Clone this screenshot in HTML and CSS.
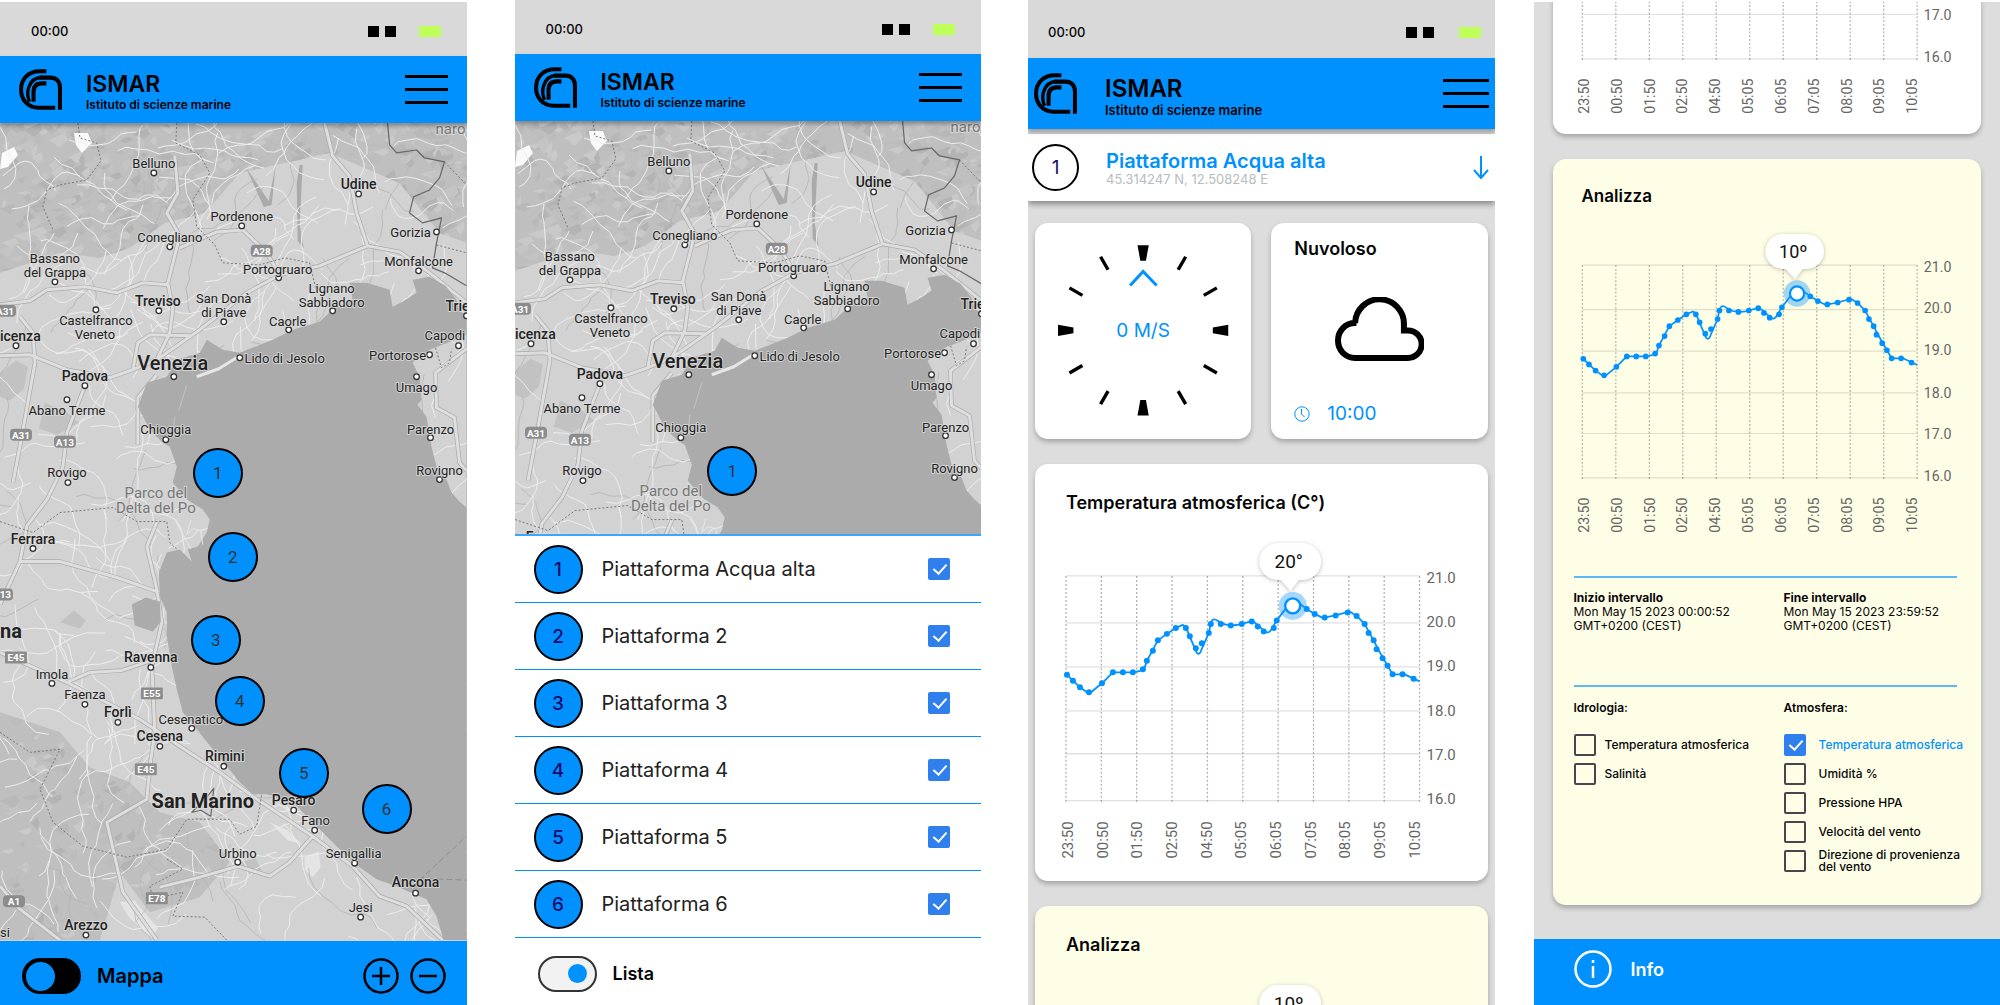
FILE: index.html
```html
<!DOCTYPE html>
<html lang="it">
<head>
<meta charset="utf-8">
<meta name="viewport" content="width=device-width, initial-scale=1">
<title>ISMAR – Istituto di scienze marine</title>
<link rel="stylesheet" href="styles.css">
</head>
<body>
<svg class="defs" aria-hidden="true">
  <symbol id="logo" viewBox="0 0 127 120">
    <g fill="none" stroke="#000">
      <path stroke-width="12" d="M81 6H62C26 6 6 30 6 60s20 54 52 54h49"/>
      <path stroke-width="10" d="M32 96C20 80 22 26 68 24"/>
      <path stroke-width="12" d="M60 25h32c20 0 29 12 29 29v66"/>
      <path stroke-width="12" d="M43 96V68c0-16 8-26 24-26h14"/>
    </g>
  </symbol>
</svg>

<main class="board">

  <section class="phone phone-map">
    <div class="status"><span>00:00</span><i class="sig"></i><i class="sig"></i><i class="bat"></i></div>
    <header class="top">
      <svg class="logo" role="img" aria-label="CNR"><use href="#logo"/></svg>
      <div class="brand"><h1>ISMAR</h1><p>Istituto di scienze marine</p></div>
      <button class="menu" aria-label="Menu"><i></i><i></i><i></i></button>
    </header>
    <div class="map" data-height="818" data-pins="6"></div>
    <footer class="bar bar-map">
      <label class="switch-label"><input class="switch switch-off" type="checkbox" role="switch"><span>Mappa</span></label>
      <button class="round" aria-label="Ingrandisci"><svg viewBox="0 0 36 36"><circle cx="18" cy="18" r="16.5"/><path d="M18 9v18M9 18h18"/></svg></button>
      <button class="round" aria-label="Riduci"><svg viewBox="0 0 36 36"><circle cx="18" cy="18" r="16.5"/><path d="M9 18h18"/></svg></button>
    </footer>
  </section>

  <section class="phone phone-list">
    <div class="status"><span>00:00</span><i class="sig"></i><i class="sig"></i><i class="bat"></i></div>
    <header class="top">
      <svg class="logo" role="img" aria-label="CNR"><use href="#logo"/></svg>
      <div class="brand"><h1>ISMAR</h1><p>Istituto di scienze marine</p></div>
      <button class="menu" aria-label="Menu"><i></i><i></i><i></i></button>
    </header>
    <div class="map" data-height="420" data-pins="1"></div>
    <ul class="platforms">
      <li><label for="p1"><b>1</b><span>Piattaforma Acqua alta</span></label><input class="check" id="p1" type="checkbox" checked></li>
      <li><label for="p2"><b>2</b><span>Piattaforma 2</span></label><input class="check" id="p2" type="checkbox" checked></li>
      <li><label for="p3"><b>3</b><span>Piattaforma 3</span></label><input class="check" id="p3" type="checkbox" checked></li>
      <li><label for="p4"><b>4</b><span>Piattaforma 4</span></label><input class="check" id="p4" type="checkbox" checked></li>
      <li><label for="p5"><b>5</b><span>Piattaforma 5</span></label><input class="check" id="p5" type="checkbox" checked></li>
      <li><label for="p6"><b>6</b><span>Piattaforma 6</span></label><input class="check" id="p6" type="checkbox" checked></li>
    </ul>
    <footer class="bar bar-list">
      <label class="switch-label"><input class="switch switch-on" type="checkbox" role="switch" checked><span>Lista</span></label>
    </footer>
  </section>

  <section class="phone phone-detail">
    <div class="status"><span>00:00</span><i class="sig"></i><i class="sig"></i><i class="bat"></i></div>
    <header class="top">
      <svg class="logo" role="img" aria-label="CNR"><use href="#logo"/></svg>
      <div class="brand"><h1>ISMAR</h1><p>Istituto di scienze marine</p></div>
      <button class="menu" aria-label="Menu"><i></i><i></i><i></i></button>
    </header>
    <div class="place">
      <b>1</b>
      <div class="place-text"><h2>Piattaforma Acqua alta</h2><p>45.314247 N, 12.508248 E</p></div>
      <button class="down" aria-label="Apri"><svg viewBox="0 0 16 24"><path d="M8 0v22M1 14l7 8 7-8"/></svg></button>
    </div>
    <div class="feed">
      <div class="pair">
        <div class="card wind"></div>
        <div class="card weather">
          <h3>Nuvoloso</h3>
          <svg class="cloud" viewBox="0 0 266 192"><path d="M60 182H218A41 41 0 0 0 218 100H206V82A73 73 0 0 0 60 78H64C30 76 9 102 9 130S30 182 60 182Z"/></svg>
          <p class="time"><svg viewBox="0 0 16 16"><circle cx="8" cy="8" r="7.2"/><path d="M7.5 3v5l3 3"/></svg><span>10:00</span></p>
        </div>
      </div>
      <article class="card"><h3>Temperatura atmosferica (C°)</h3><div class="chart" data-tip="20°"></div></article>
      <article class="card yellow"><h3>Analizza</h3><div class="chart" data-tip="10º"></div></article>
    </div>
  </section>

  <section class="phone phone-analysis">
    <div class="feed">
      <article class="card"><h3>Temperatura atmosferica (C°)</h3><div class="chart" data-tip="20°"></div></article>
      <article class="card yellow">
        <h3>Analizza</h3>
        <div class="chart" data-tip="10º"></div>
        <div class="interval">
          <p><strong>Inizio intervallo</strong><br>Mon May 15 2023 00:00:52<br>GMT+0200 (CEST)</p>
          <p><strong>Fine intervallo</strong><br>Mon May 15 2023 23:59:52<br>GMT+0200 (CEST)</p>
        </div>
        <div class="filters">
          <fieldset>
            <legend>Idrologia:</legend>
            <label><input class="check" type="checkbox"><span>Temperatura atmosferica</span></label>
            <label><input class="check" type="checkbox"><span>Salinità</span></label>
          </fieldset>
          <fieldset>
            <legend>Atmosfera:</legend>
            <label class="on"><input class="check" type="checkbox" checked><span>Temperatura atmosferica</span></label>
            <label><input class="check" type="checkbox"><span>Umidità %</span></label>
            <label><input class="check" type="checkbox"><span>Pressione HPA</span></label>
            <label><input class="check" type="checkbox"><span>Velocità del vento</span></label>
            <label><input class="check" type="checkbox"><span>Direzione di provenienza<br>del vento</span></label>
          </fieldset>
        </div>
      </article>
    </div>
    <footer class="bar bar-info">
      <svg viewBox="0 0 38 38"><circle cx="19" cy="19" r="17.5"/><path d="M19 16v12M19 10v3"/></svg>
      <span>Info</span>
    </footer>
  </section>

</main>
<script src="script.js"></script>
</body>
</html>
```

FILE: styles.css
```css
:root {
  --blue: #0091ff;
  --grey: #dddddd;
  --ink: #060606;
}

* { box-sizing: border-box; }

body {
  margin: 0;
  background: #fff;
  color: var(--ink);
  font-family: Inter, "Liberation Sans", sans-serif;
}

h1, h2, h3, p, ul { margin: 0; padding: 0; }
button { border: 0; padding: 0; background: none; color: inherit; font: inherit; cursor: pointer; }
.defs { display: none; }

.board {
  display: flex;
  height: 100vh;
  min-height: 940px;
}

.phone {
  flex: 1 1 0;
  min-width: 0;
  display: flex;
  flex-direction: column;
  overflow: hidden;
}
.phone-map { margin-top: 2px; }
.phone-list { margin-left: 48px; }
.phone-detail { margin-left: 47px; background: var(--grey); }
.phone-analysis { margin: 2px 0 0 39px; background: var(--grey); }

/* status bar */
.status {
  flex: none;
  display: flex;
  align-items: center;
  height: 54px;
  padding: 4px 26px 0 31px;
  background: #d9d9d9;
  font-size: 13px;
  font-weight: 500;
}
.status span { margin-right: auto; }
.sig { width: 11px; height: 11px; margin-left: 6px; background: #000; }
.bat { width: 22px; height: 11px; margin-left: 23px; background: #bfff5a; }
.phone-detail .status { height: 58px; padding: 6px 14px 0 20px; }
.phone-detail .bat { margin-left: 25px; }

/* header */
.top {
  position: relative;
  z-index: 1;
  flex: none;
  display: flex;
  align-items: center;
  height: 67px;
  padding: 0 19px;
  background: var(--blue);
  box-shadow: 0 3px 4px rgba(0, 0, 0, .3);
  color: #000;
}
.logo { width: 43px; height: 41px; }
.brand { margin: 0 auto 0 24px; padding-top: 5px; }
.brand h1 { font-size: 23px; line-height: 26px; font-weight: 600; }
.brand p { font-size: 12px; line-height: 16px; font-weight: 600; }
.menu { display: flex; flex-direction: column; gap: 10px; width: 43px; }
.menu i { height: 3px; background: #000; }
.phone-detail .top { height: 71px; padding: 0 6px; }
.phone-detail .brand { margin-left: 28px; padding-top: 7px; }
.phone-detail .brand h1 { font-size: 24px; }
.phone-detail .brand p { font-size: 13px; }
.phone-detail .menu { width: 46px; }

/* map */
.map { position: relative; flex: 1 1 0; min-height: 0; overflow: hidden; background: #ababab; }
.map svg { display: block; width: 100%; height: auto; font-family: Roboto, sans-serif; }
.pin {
  position: absolute;
  left: var(--x);
  top: var(--y);
  width: 50px;
  height: 50px;
  margin: -25px 0 0 -25px;
  border: 2px solid #000;
  border-radius: 50%;
  background: var(--blue);
  color: #333;
  font: 400 17px Roboto, sans-serif;
}

/* bottom bars */
.bar { flex: none; display: flex; align-items: center; height: 64px; }
.bar-map { padding: 6px 21px 0 22px; gap: 11px; background: var(--blue); color: #000; }
.bar-list { height: 67px; padding: 4px 0 0 23px; }
.bar-info { height: 66px; padding: 0 0 6px 40px; gap: 19px; background: var(--blue); color: #fff; font-size: 18px; font-weight: 600; }
.bar-info svg { width: 38px; height: 38px; fill: none; stroke: #fff; stroke-width: 2.5; }
.switch-label { display: flex; align-items: center; gap: 16px; margin-right: auto; font-size: 20px; font-weight: 600; }
.bar-list .switch-label { font-size: 18px; }
.switch {
  appearance: none;
  display: flex;
  align-items: center;
  width: 59px;
  height: 36px;
  margin: 0;
  padding: 0 4px;
  border-radius: 18px;
  background: #000;
}
.switch::before { content: ""; width: 29px; height: 29px; border-radius: 50%; background: var(--blue); }
.switch-on { justify-content: flex-end; padding: 0 8px; border: 2px solid #333; background: #f2f2f2; }
.switch-on::before { width: 19px; height: 19px; }
.round, .round svg { display: block; width: 36px; height: 36px; }
.round svg { fill: none; stroke: #000; stroke-width: 2.5; }

/* platform list */
.platforms { flex: none; list-style: none; border-top: 2px solid #3aa7f8; }
.platforms li {
  display: flex;
  align-items: center;
  height: 67px;
  padding: 0 31px 0 19px;
  border-bottom: 1px solid var(--blue);
}
.platforms label { flex: 1; display: flex; align-items: center; gap: 19px; font-size: 20px; font-weight: 400; color: #222; }
.platforms b {
  display: grid;
  place-items: center;
  width: 49px;
  height: 49px;
  border: 2px solid #000;
  border-radius: 50%;
  background: var(--blue);
  color: #1d0a6b;
  font-size: 19px;
  font-weight: 500;
}

.check {
  appearance: none;
  flex: none;
  width: 22px;
  height: 22px;
  margin: 0;
  border: 2px solid #49454f;
  border-radius: 2px;
}
.check:checked {
  border: 0;
  background: #2f80ed;
}
.check:checked::before {
  content: "";
  display: block;
  width: 6px;
  height: 11px;
  margin: 3px 0 0 8px;
  border: solid #fff;
  border-width: 0 2px 2px 0;
  transform: rotate(42deg);
}

/* platform detail */
.place {
  flex: none;
  display: flex;
  align-items: center;
  height: 67px;
  margin-top: 5px;
  padding: 0 6px 0 4px;
  background: #fff;
  box-shadow: 0 3px 6px rgba(0, 0, 0, .4);
}
.place b {
  display: grid;
  place-items: center;
  width: 47px;
  height: 47px;
  border: 2px solid #000;
  border-radius: 50%;
  color: #1d0a6b;
  font-size: 19px;
  font-weight: 400;
}
.place-text { margin: 0 auto 0 27px; }
.place-text h2 { color: var(--blue); font-size: 20px; line-height: 22px; font-weight: 600; }
.place-text p { color: #b8bcc0; font-size: 13px; line-height: 14px; }
.down svg { display: block; width: 16px; height: 24px; fill: none; stroke: var(--blue); stroke-width: 2; }

.feed { flex: 1 1 0; min-height: 0; display: flex; flex-direction: column; overflow: hidden; }
.phone-detail .feed { gap: 25px; padding: 22px 7px 0; }
.phone-analysis .feed { justify-content: flex-end; gap: 25px; padding: 0 19px 34px; }

.card {
  flex: none;
  border-radius: 13px;
  background: #fff;
  box-shadow: 0 3px 5px rgba(0, 0, 0, .25);
}
.card h3 { padding: 28px 31px 0; font-size: 18px; line-height: 22px; font-weight: 600; }
.card .chart { padding-top: 9px; }
.yellow { background: #fefee6; }
.phone-analysis .card h3 { padding: 26px 29px 0; font-size: 17px; }
.phone-analysis .card .chart { padding-top: 8px; }
.chart svg { display: block; width: 100%; height: auto; font-family: Roboto, sans-serif; }

.pair { flex: none; display: grid; grid-template-columns: 1fr 1fr; gap: 20px; }
.wind svg { display: block; width: 100%; height: auto; }
.weather { display: flex; flex-direction: column; justify-content: space-between; padding: 15px 23px 14px; }
.card.weather h3 { padding: 0; }
.cloud { width: 89px; margin: 0 auto 6px; fill: none; stroke: #000; stroke-width: 18; }
.time { display: flex; align-items: center; gap: 17px; color: var(--blue); font-size: 19px; line-height: 22px; }
.time svg { width: 16px; height: 16px; fill: none; stroke: var(--blue); }

/* analysis */
.interval, .filters {
  display: grid;
  grid-template-columns: 210px 1fr;
  margin: 0 24px 0 21px;
  border-top: 2px solid #5db8f5;
  font-size: 12px;
}
.interval { height: 109px; margin-top: 22px; padding-top: 13px; line-height: 14px; }
.filters { height: 220px; padding-top: 14px; line-height: 12px; font-weight: 500; }
.filters fieldset { display: flex; flex-direction: column; gap: 7px; min-width: 0; margin: 0; padding: 0; border: 0; }
.filters legend { padding: 0 0 19px; line-height: 14px; font-size: 12px; font-weight: 600; }
.filters label { display: flex; align-items: center; gap: 9px; white-space: nowrap; height: 22px; }
.filters fieldset + fieldset label { gap: 13px; }
.filters .on { color: var(--blue); }
```

FILE: script.js
```js
const INK = '#222', BLUE = '#0091ff';

/* ---------- map ---------- */
const SEA = 'M430 154 446 163 457 177 460 187 467 194V212L456 217 430 227 413 240 420 254 422 277 418 282 427 294 432 324 437 344 447 357 452 370 460 379 467 385V818H444L437 794 427 777 415 772 397 764 377 757 353 740 330 717 310 697 293 680 267 672 253 672 240 660 227 644 213 627 197 607 183 590 177 567 172 544 167 514 167 490 160 474 159 450 167 430 180 427 192 439 188 427 198 424 207 410 210 397 203 387 187 377 173 360 177 344 170 324 163 320 150 307 138 284 147 260 167 254 177 237 200 230 207 217 223 227 240 230 273 217 293 207 320 199 333 187 353 177 350 160 367 160 390 167 393 184 403 179 417 170 413 157Z';

const RELIEF = 'M0 0H467V120L440 110 400 60 330 30 240 50 205 90 165 100 130 125 100 135 60 130 0 150ZM0 590 60 610 90 645 130 660 160 690 200 700 230 740 200 775 150 790 120 750 100 818H0Z';

const MAJOR = [
  'M0 233 30 232 67 247 110 255 133 247 157 237 200 207 247 170 280 152 320 143 368 123 400 129 430 150 467 180',
  'M325 0 333 33 350 53 357 90 368 123',
  'M175 33 178 70 167 90 180 113 168 160 173 187 170 210 157 237',
  'M180 125 217 109 243 107 267 130 280 152',
  'M0 182 30 178 47 167 85 164 117 170 143 160 168 162',
  'M20 194 33 210 35 240 23 307 13 360',
  'M133 247 138 220 150 212 190 213',
  'M85 263 67 310 63 344 47 377 27 403 20 439 0 482',
  'M20 439 60 439 117 455 157 469',
  'M158 397 147 424 157 467 162 500 152 544 155 610 150 644 147 677 107 700 123 770 157 818',
  'M0 530 67 560 140 597 180 624 220 650 253 674 280 692 313 714 353 744 380 774 407 784 443 818',
  'M67 560 90 550 122 548 152 538',
  'M0 764 20 787 60 818',
  'M138 322 138 300 138 275 157 252',
  'M160 765 200 755 238 744 270 754 290 740 313 714',
  'M467 226 436 250 437 285 455 295 460 340 467 348'
];

const DASHED = [
  'M78 0 80 15 97 20 101 38 87 57 60 62 47 67 43 84 53 107',
  'M177 0 176 20 200 32 210 50 193 77 197 104 215 122 223 140 260 142 285 135 310 140 316 165',
  'M0 399 33 410 60 390 113 385 137 399 167 399 170 420 190 439',
  'M0 610 30 630 60 627 40 667 53 700 83 724 127 735 167 727 187 697 230 697 240 712 257 704 262 672',
  'M167 737 183 747 150 764 153 777 183 770 173 794 205 795 227 818',
  'M437 122 467 130M445 39 467 62M436 225 442 245 450 240 452 226'
];

/* x, y of the middle, text, style, anchor */
const LABELS = [
  [451, 6, 'naro', 'park'], [154, 40, 'Belluno'], [359, 61, 'Udine', 'city'], [242, 93, 'Pordenone'],
  [411, 109, 'Gorizia'], [170, 114, 'Conegliano'], [55, 135, 'Bassano'], [55, 149, 'del Grappa'],
  [419, 138, 'Monfalcone'], [278, 146, 'Portogruaro'], [332, 165, 'Lignano'], [332, 179, 'Sabbiadoro'],
  [158, 178, 'Treviso', 'city'], [224, 175, 'San Donà'], [224, 189, 'di Piave'], [96, 197, 'Castelfranco'],
  [95, 211, 'Veneto'], [288, 198, 'Caorle'], [446, 183, 'Trie', 'city', 'start'], [425, 212, 'Capodi', 'town', 'start'],
  [0, 213, 'icenza', 'city', 'start'], [285, 235, 'Lido di Jesolo'], [398, 232, 'Portorose'],
  [173, 240, 'Venezia', 'big'], [85, 253, 'Padova', 'city'], [417, 264, 'Umago'], [67, 287, 'Abano Terme'],
  [166, 306, 'Chioggia'], [431, 306, 'Parenzo'], [67, 349, 'Rovigo'], [440, 347, 'Rovigno'],
  [156, 370, 'Parco del', 'park'], [156, 385, 'Delta del Po', 'park'], [33, 416, 'Ferrara', 'city'],
  [0, 509, 'na', 'state', 'start'], [151, 535, 'Ravenna', 'city'], [52, 552, 'Imola'], [85, 572, 'Faenza'],
  [118, 590, 'Forlì', 'city'], [191, 597, 'Cesenatico'], [160, 614, 'Cesena', 'city'], [225, 634, 'Rimini', 'city'],
  [203, 679, 'San Marino', 'state'], [294, 678, 'Pesaro', 'city'], [316, 698, 'Fano'], [238, 731, 'Urbino'],
  [354, 731, 'Senigallia'], [416, 760, 'Ancona', 'city'], [361, 785, 'Jesi'], [86, 803, 'Arezzo', 'city'],
  [0, 810, 'si', 'town', 'start']
];
const TYPE = {
  town: [13, 400, INK], city: [14, 500, INK], big: [20, 500, INK], state: [20, 700, INK], park: [15, 400, '#777']
};
const DOTS = [
  [154, 50], [359, 71], [242, 103], [437, 109], [170, 124], [55, 159], [419, 148], [279, 155], [333, 188], [159, 188],
  [224, 199], [96, 187], [289, 207], [467, 193], [459, 223], [16, 223], [240, 235], [430, 232], [174, 254], [85, 263],
  [417, 254], [67, 277], [166, 317], [431, 315], [68, 360], [440, 357], [33, 426], [151, 545], [52, 561], [85, 582],
  [118, 600], [192, 606], [160, 624], [224, 644], [294, 688], [315, 708], [238, 740], [355, 741], [416, 771],
  [361, 795], [86, 813]
];
const SHIELDS = [
  [262, 128, 'A28'], [5, 188, 'A31'], [21, 312, 'A31'], [65, 319, 'A13'], [2, 472, 'A13'], [16, 535, 'E45'],
  [152, 571, 'E55'], [146, 647, 'E45'], [157, 776, 'E78'], [14, 779, 'A1']
];
const PINS = [[218, 350], [233, 434], [216, 517], [240, 578], [304, 650], [387, 686]];

function random(seed) {
  return () => (seed = (seed * 16807) % 2147483647) / 2147483647;
}

function terrain() {
  const r = random(41), shades = ['#b8b8b8', '#c9c9c9', '#bcbcbc', '#b3b3b3', '#c4c4c4'];
  let out = '';
  for (let i = 0; i < 900; i++) {
    const x = r() * 467, y = i % 3 ? r() * 150 : 590 + r() * 228, w = 4 + r() * 13, h = 2 + r() * 6;
    out += `<path fill="${shades[i % 5]}" d="M${x | 0} ${y | 0}l${w | 0} ${-h | 0} ${(r() * 5) | 0} ${h | 0} ${-w / 2 | 0} ${h | 0}z"/>`;
  }
  return out;
}

function lanes(count, seed, color, width) {
  const r = random(seed);
  let d = '';
  for (let i = 0; i < count; i++) {
    let a = r() * 6.28;
    d += `M${(r() * 467) | 0} ${(r() * 818) | 0}`;
    for (let j = 0; j < 9; j++) {
      a += (r() - 0.5) * 1.3;
      const s = 5 + r() * 9;
      d += `l${(Math.cos(a) * s).toFixed(1)} ${(Math.sin(a) * s).toFixed(1)}`;
    }
  }
  return `<path fill="none" stroke="${color}" stroke-width="${width}" d="${d}"/>`;
}

function drawMap(el, n) {
  const height = +el.dataset.height, id = 'relief' + n;
  const visible = item => item[1] < height;
  const major = MAJOR.join('');
  const texts = LABELS.filter(visible).map(([x, y, t, kind = 'town', anchor = 'middle']) => {
    const [size, weight, color] = TYPE[kind];
    return `<text x="${x}" y="${Math.round(y + size * 0.36)}" font-size="${size}" font-weight="${weight}" fill="${color}" text-anchor="${anchor}">${t}</text>`;
  }).join('');
  const dots = DOTS.filter(visible).map(([x, y]) => `<circle cx="${x}" cy="${y}" r="2.8"/>`).join('');
  const shields = SHIELDS.filter(visible).map(([x, y, t]) =>
    `<rect x="${x - 11}" y="${y - 6}" width="22" height="12" rx="${t[0] === 'A' ? 4 : 1}" fill="#8c8c8c"/>` +
    `<text x="${x}" y="${y + 4}" font-size="10" font-weight="700" fill="#fff" text-anchor="middle">${t}</text>`).join('');

  el.innerHTML = `<svg viewBox="0 0 467 820">
    <defs><clipPath id="${id}"><path d="${RELIEF}"/></clipPath></defs>
    <g stroke-linejoin="round">
      <path fill="#d2d2d2" d="M0 0H467V820H0Z"/>
      <g clip-path="url(#${id})"><path fill="#bfbfbf" d="M0 0H467V820H0Z"/>${terrain()}</g>
      <path fill="#c2c2c2" d="M0 250l16-12 12 6-4 22-14 12-10-4zM45 280l20 8 14 12-22 12-18-6zM60 500l14-12 12 10-6 8zM240 740l16-4 6 12-12 4z"/>
      <path fill="#fafafa" d="M74 10l14 0 4 10-10 10-6-8zM2 30l12-6 4 8-10 12-8 2z"/>
      <path fill="#e4e4e4" d="M270 700l18 8 14 14-14-4zM305 735l14-6 2 16-8 10-8-8zM120 780l14-2 24 28-6 10-22-20z"/>
      <path fill="#aaa" d="M246 44l18 40 8-2 4-40-7 36zM297 60l3-18 3 0-3 60 4 24-6-8z"/>
      ${lanes(60, 77, '#b4b4b4', 0.8)}${lanes(290, 9, '#ededed', 1)}
      <path fill="none" stroke="#aaa" stroke-width="4.400" d="${major}"/>
      <path fill="none" stroke="#dedede" stroke-width="3" d="${major}"/>
      <path fill="none" stroke="#777" stroke-dasharray="2 2" d="${DASHED.join('')}"/>
      <path fill="none" stroke="#666" stroke-width="1.200" d="M388 0 390 22 397 30 417 27 425 35 445 39 440 55 430 67 414 74 410 90 423 100 442 95 437 120 433 145 445 150 467 163M192 690l14-14 8-10-3 28-10-6-8 2z"/>
      <path fill="#ababab" d="${SEA}M132 482l14-7 14 4 1 20-8 10-18-6z"/>
      <path fill="none" stroke="#e6e6e6" stroke-width="3" d="M197 254l22-8 21-13"/>
      <path fill="none" stroke="#c2c2c2" d="M187 262l-8 26M175 294l-2 20"/>
      <path fill="none" stroke="#e6e6e6" d="M175 397l8 15 8 14M191 398l-4 14 6-6 8 2 2 14"/>
      <path fill="none" stroke="#8e8e8e" stroke-dasharray="6 3" d="M420 758l47-44M420 756l47 2"/>
    </g>
    ${shields}
    <g fill="#fff" stroke="#333" stroke-width="1.300">${dots}</g>
    <g stroke="#dcdcdc" stroke-opacity=".8" stroke-width="2" stroke-linejoin="round" paint-order="stroke">${texts}</g>
  </svg>`;

  PINS.slice(0, +el.dataset.pins).forEach(([x, y], i) => {
    const b = document.createElement('button');
    b.className = 'pin';
    b.textContent = i + 1;
    b.style.setProperty('--x', (x / 4.67).toFixed(2) + '%');
    b.style.setProperty('--y', y + 'px');
    el.append(b);
  });
}

/* ---------- temperature chart ---------- */
const POINTS = [
  [32, 152], [38, 158], [45, 164.5], [54, 169.5], [67, 160.5], [78, 149.5], [88, 149.5], [98, 149.5],
  [108, 146.5], [112, 138], [118, 128], [123, 117.5], [132, 111], [141, 105], [151, 105], [155, 113.5],
  [161, 125.5], [167, 120.5], [174, 110], [176, 101], [186, 101], [196, 102.5], [207, 101], [217, 98.5],
  [223, 103.5], [229, 108.5], [239, 105], [242, 97.5], [272, 86], [280, 91], [290, 94.5], [301, 92.5],
  [313, 89.5], [322, 93], [330, 101], [334, 110], [339, 117.5], [342, 126.5], [348, 135.5], [353, 143],
  [358, 151.5], [368, 151.5], [379, 156]
];
const CURVE = 'M31 151 45 164.5 52 169.5H56L67 160.5 78 149.5H99L109 147 112 138 123 117.5 132 111 141 105 148 102 151 104 155 114 162 130Q165 133 167 126L174 110 176 100Q178 94 183 98L190 101.5Q200 103.500 207 101L218 98 224 103 230 108.5Q234 111.500 237 106L242 97.5 250 87 258 80H264L272 86 280 91 288 95 301 92.5 315 88.500 322 93 330 101 337 114 345 129 353 143 358 151.5H370L385 158.5';
const ROWS = [53, 100, 144, 188, 231, 278];
const TIMES = ['23:50', '00:50', '01:50', '02:50', '04:50', '05:05', '06:05', '07:05', '08:05', '09:05', '10:05'];

function drawChart(el) {
  const grid = ROWS.map(y => `M31 ${y}H385`).join('');
  const cols = TIMES.map((t, i) => `M${(31 + 35.4 * i).toFixed(1)} 53V279`).join('');
  const values = ROWS.map((y, i) => `<text x="392" y="${60 + Math.round(44.2 * i)}">${21 - i}.0</text>`).join('');
  const times = TIMES.map((t, i) => `<text transform="translate(${(38 + 34.7 * i).toFixed(1)} 336) rotate(-90)">${t}</text>`).join('');
  const dots = POINTS.map(([x, y]) => `<circle cx="${x}" cy="${y}" r="3"/>`).join('');
  el.innerHTML = `<svg viewBox="0 0 453 358">
    <path fill="none" stroke="#000" stroke-opacity=".12" stroke-width="1.300" d="${grid}"/>
    <path fill="none" stroke="#000" stroke-opacity=".3" stroke-width="1.300" stroke-dasharray="2 2" d="${cols}"/>
    <g font-size="15" fill="#666">${values}${times}</g>
    <path fill="none" stroke="${BLUE}" stroke-width="1.800" stroke-linejoin="round" d="${CURVE}"/>
    <g fill="${BLUE}">${dots}</g>
    <path fill="#fff" d="M243 20H268a18.500 18.500 0 0 1 0 37H264L256 68 246 57H243a18.500 18.500 0 0 1 0-37Z" style="filter:drop-shadow(0 1px 2px rgba(0,0,0,.25))"/>
    <text x="254" y="45" font-size="19" fill="#111" text-anchor="middle">${el.dataset.tip}</text>
    <circle cx="258" cy="83" r="14" fill="${BLUE}" fill-opacity=".36"/>
    <circle cx="258" cy="83" r="7.500" fill="#fff" stroke="${BLUE}" stroke-width="2.400"/>
  </svg>`;
}

/* ---------- wind rose ---------- */
function drawWind(el) {
  let marks = '';
  for (let a = 0; a < 360; a += 30) {
    const d = a % 90 ? 'M106.300 22.300h3.400v15h-3.400z' : 'M102.400 22.300h11.200l-2.800 15.400h-5.600z';
    marks += `<path d="${d}" transform="rotate(${a} 108 107.300)"/>`;
  }
  el.innerHTML = `<svg viewBox="0 0 216 216">${marks}
    <path fill="none" stroke="${BLUE}" stroke-width="3" d="M95 62.500 108 48.500 121.500 62.500"/>
    <text x="108" y="114" font-size="19" fill="${BLUE}" text-anchor="middle">0 M/S</text></svg>`;
}

document.querySelectorAll('.map').forEach(drawMap);
document.querySelectorAll('.chart').forEach(drawChart);
document.querySelectorAll('.wind').forEach(drawWind);
```
